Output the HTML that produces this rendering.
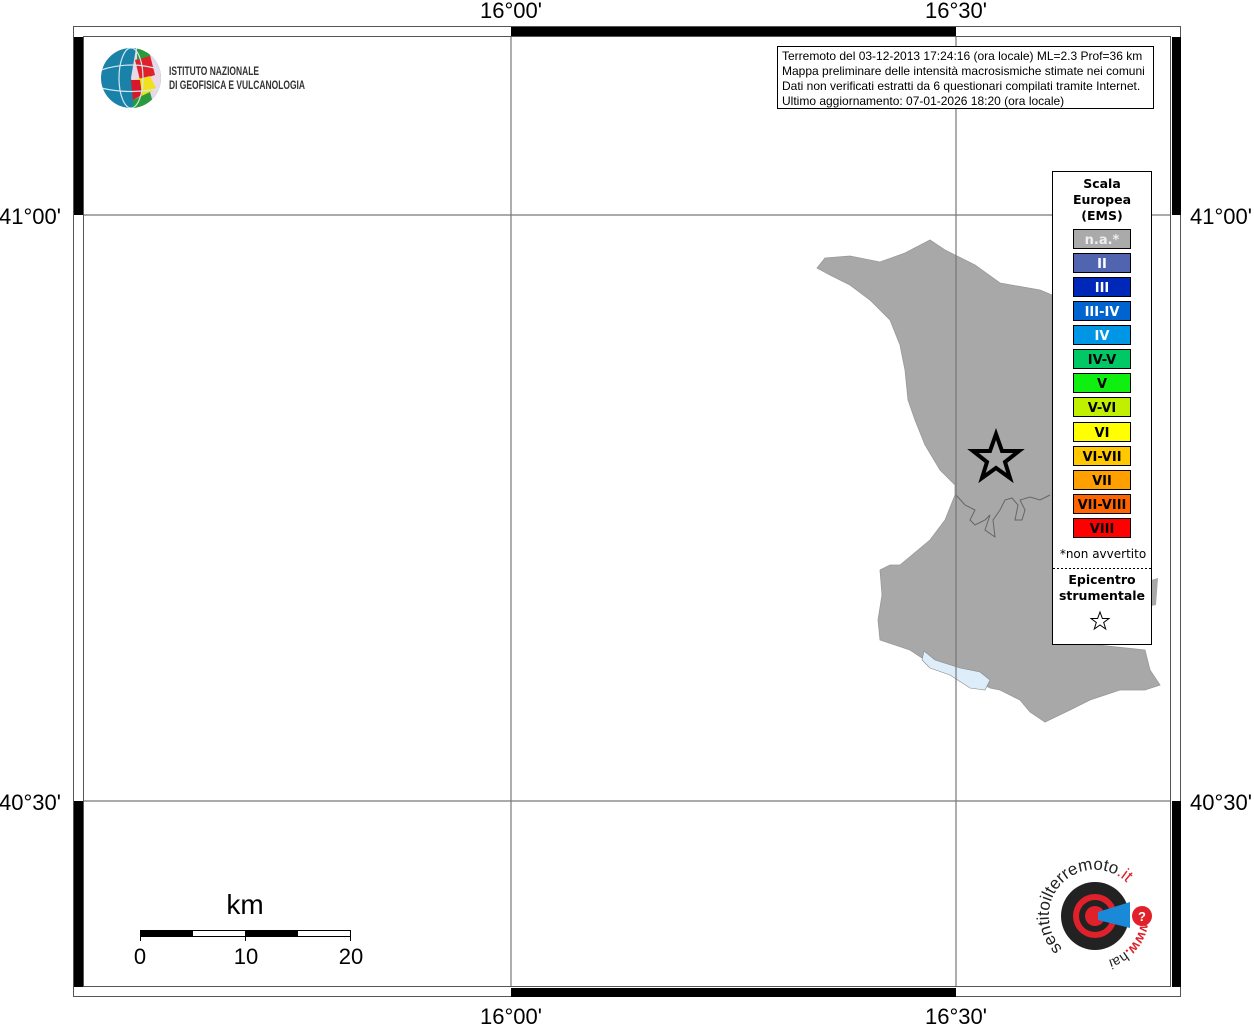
<!DOCTYPE html>
<html><head><meta charset="utf-8"><style>
html,body{margin:0;padding:0;background:#fff;}
svg{display:block;}
</style></head><body>
<svg width="1254" height="1024" viewBox="0 0 1254 1024" xmlns="http://www.w3.org/2000/svg" font-family="Liberation Sans, sans-serif">
<rect width="1254" height="1024" fill="#fff"/>
<path d="M817,268 L825,258 L850,256 L880,262 L905,253 L930,240 L945,250 L975,265 L1000,283 L1040,290 L1052,295 L1052,640 L1145,650 L1150,670 L1160,685 L1145,690 L1120,690 L1090,700 L1070,710 L1045,722 L1030,712 L1020,700 L1000,690 L990,688 L975,680 L950,668 L925,660 L910,650 L880,640 L878,620 L882,595 L880,570 L890,565 L900,565 L930,540 L945,520 L955,495 L955,485 L940,470 L925,445 L915,420 L908,400 L905,370 L900,345 L890,320 L870,300 L850,285 L830,275 Z" fill="#a8a8a8" stroke="#999" stroke-width="0.8"/>
<path d="M1151,580 L1158,578 L1156,605 L1151,606Z" fill="#a8a8a8"/>
<path d="M924,651 L935,660 L960,668 L980,672 L990,680 L985,690 L970,688 L950,675 L930,668 L922,660Z" fill="#ddeefa" stroke="#888" stroke-width="0.6"/>
<path d="M956,495 L965,505 L975,510 L970,520 L975,525 L985,520 L990,515 L985,530 L995,537 L993,520 L1000,510 L1005,500 L1012,498 L1018,505 L1015,520 L1022,520 L1025,510 L1020,500 L1030,497 L1040,500 L1050,495" fill="none" stroke="#666" stroke-width="1"/>
<g stroke="#777" stroke-width="1.2">
<line x1="511" y1="36" x2="511" y2="987"/><line x1="956" y1="36" x2="956" y2="987"/>
<line x1="83" y1="215" x2="1171" y2="215"/><line x1="83" y1="801" x2="1171" y2="801"/>
</g>
<rect x="73.5" y="26.5" width="1107" height="970" fill="none" stroke="#555" stroke-width="1"/>
<rect x="83.5" y="36.5" width="1087" height="950" fill="none" stroke="#555" stroke-width="1"/>
<g fill="#000">
<rect x="511" y="27" width="445" height="9"/><rect x="511" y="988" width="445" height="9"/>
<rect x="74" y="37" width="9" height="178"/><rect x="74" y="801" width="9" height="186"/>
<rect x="1172" y="37" width="9" height="178"/><rect x="1172" y="801" width="9" height="186"/>
</g>
<g font-size="22" fill="#000">
<text x="511" y="18" text-anchor="middle">16°00'</text>
<text x="956" y="18" text-anchor="middle">16°30'</text>
<text x="511" y="1024" text-anchor="middle">16°00'</text>
<text x="956" y="1024" text-anchor="middle">16°30'</text>
<text x="-1" y="224">41°00'</text><text x="-1" y="810">40°30'</text>
<text x="1190" y="224">41°00'</text><text x="1190" y="810">40°30'</text>
</g>
<path d="M996,434 L1002,451 L1019,451 L1005,462 L1010,478 L996,468 L982,478 L987,462 L973,451 L990,451Z" fill="none" stroke="#000" stroke-width="4"/>
<rect x="777.5" y="46.5" width="376" height="62" fill="#fff" stroke="#000"/>
<g font-size="12" fill="#000">
<text x="782" y="60">Terremoto del 03-12-2013 17:24:16 (ora locale) ML=2.3 Prof=36 km</text>
<text x="782" y="75">Mappa preliminare delle intensità macrosismiche stimate nei comuni</text>
<text x="782" y="90">Dati non verificati estratti da 6 questionari compilati tramite Internet.</text>
<text x="782" y="105">Ultimo aggiornamento: 07-01-2026 18:20 (ora locale)</text>
</g>
<rect x="1052.5" y="171.5" width="99" height="473" fill="#fff" stroke="#000"/>
<g font-family="DejaVu Sans, sans-serif" font-weight="bold" font-size="12.5" text-anchor="middle">
<text x="1102" y="188">Scala</text>
<text x="1102" y="204">Europea</text>
<text x="1102" y="220">(EMS)</text>
</g>
<g stroke="#000" stroke-width="1">
<rect x="1073.5" y="229.5" width="57" height="19" fill="#aaaaaa"/>
<rect x="1073.5" y="253.5" width="57" height="19" fill="#5064b0"/>
<rect x="1073.5" y="277.5" width="57" height="19" fill="#0028b8"/>
<rect x="1073.5" y="301.5" width="57" height="19" fill="#0064d0"/>
<rect x="1073.5" y="325.5" width="57" height="19" fill="#0096e6"/>
<rect x="1073.5" y="349.5" width="57" height="19" fill="#00c864"/>
<rect x="1073.5" y="373.5" width="57" height="19" fill="#10f010"/>
<rect x="1073.5" y="397.5" width="57" height="19" fill="#c0f000"/>
<rect x="1073.5" y="422.5" width="57" height="19" fill="#ffff00"/>
<rect x="1073.5" y="446.5" width="57" height="19" fill="#ffc800"/>
<rect x="1073.5" y="470.5" width="57" height="19" fill="#ffa000"/>
<rect x="1073.5" y="494.5" width="57" height="19" fill="#ff6400"/>
<rect x="1073.5" y="518.5" width="57" height="19" fill="#ff0000"/>
</g>
<g font-family="DejaVu Sans, sans-serif" font-weight="bold" font-size="13" text-anchor="middle">
<text x="1102" y="244" fill="#eee">n.a.*</text>
<text x="1102" y="268" fill="#fff">II</text>
<text x="1102" y="292" fill="#fff">III</text>
<text x="1102" y="316" fill="#fff">III-IV</text>
<text x="1102" y="340" fill="#fff">IV</text>
<text x="1102" y="364" fill="#000">IV-V</text>
<text x="1102" y="388" fill="#000">V</text>
<text x="1102" y="412" fill="#000">V-VI</text>
<text x="1102" y="437" fill="#000">VI</text>
<text x="1102" y="461" fill="#000">VI-VII</text>
<text x="1102" y="485" fill="#000">VII</text>
<text x="1102" y="509" fill="#000">VII-VIII</text>
<text x="1102" y="533" fill="#000">VIII</text>
</g>
<text x="1103" y="558" font-family="DejaVu Sans, sans-serif" font-size="12" text-anchor="middle">*non avvertito</text>
<line x1="1053" y1="568.5" x2="1151" y2="568.5" stroke="#000" stroke-dasharray="2,2"/>
<g font-family="DejaVu Sans, sans-serif" font-weight="bold" font-size="12.5" text-anchor="middle">
<text x="1102" y="584">Epicentro</text>
<text x="1102" y="600">strumentale</text>
</g>
<path d="M1100,612 L1102.4,618.5 L1109,618.5 L1103.7,622.5 L1105.7,629 L1100,625 L1094.3,629 L1096.3,622.5 L1091,618.5 L1097.6,618.5Z" fill="#fff" stroke="#000" stroke-width="1"/>
<text x="245" y="914" font-size="28" text-anchor="middle">km</text>
<rect x="140.5" y="930.5" width="210" height="6" fill="#fff" stroke="#000"/>
<rect x="140" y="930" width="53" height="7" fill="#000"/><rect x="245" y="930" width="53" height="7" fill="#000"/>
<g stroke="#000"><line x1="140.5" y1="930" x2="140.5" y2="941"/><line x1="245.5" y1="930" x2="245.5" y2="941"/><line x1="350.5" y1="930" x2="350.5" y2="941"/></g>
<g font-size="22" text-anchor="middle"><text x="140" y="964">0</text><text x="246" y="964">10</text><text x="351" y="964">20</text></g>
<defs><clipPath id="g"><circle cx="131" cy="78" r="30"/></clipPath>
<path id="arc" d="M1062.5,948.5 A46,46 0 1,1 1138,900"/>
<path id="arc2" d="M1141,920 A46,46 0 0,1 1079,959"/></defs>
<g clip-path="url(#g)">
<rect x="100" y="47" width="62" height="62" fill="#1a82a8"/>
<path d="M136,48 L162,48 L162,110 L136,110 L131,78Z" fill="#e8d8e8"/>
<path d="M135,60 L150,55 L155,75 L140,80Z" fill="#e0202a"/>
<path d="M134,80 L150,76 L156,88 L140,100Z" fill="#f0e020"/>
<path d="M131,80 L140,80 L142,95 L133,100Z" fill="#d8182a"/>
<path d="M133,100 L150,92 L155,110 L133,110Z" fill="#2a9a3a"/>
<path d="M137,48 L150,48 L150,56 L137,60Z" fill="#2a9a3a"/>
<g stroke="#cfeaf3" stroke-width="1.2" fill="none"><ellipse cx="131" cy="78" rx="12" ry="30"/><path d="M101,70 Q131,60 161,70 M101,88 Q131,95 161,88"/></g>
</g>
<text x="169" y="75" font-size="12" fill="#333" font-weight="bold" textLength="90" lengthAdjust="spacingAndGlyphs">ISTITUTO NAZIONALE</text>
<text x="169" y="89" font-size="12" fill="#333" font-weight="bold" textLength="136" lengthAdjust="spacingAndGlyphs">DI GEOFISICA E VULCANOLOGIA</text>
<circle cx="1095" cy="916" r="34" fill="#222"/>
<circle cx="1095" cy="916" r="22" fill="#e0202a"/>
<circle cx="1095" cy="916" r="16" fill="#222"/>
<circle cx="1095" cy="916" r="10" fill="#e0202a"/>
<path d="M1098,912 L1130,902 L1130,928 L1098,920Z" fill="#1a8ad8"/>
<circle cx="1142" cy="916" r="10" fill="#e0202a"/>
<text x="1142" y="921" font-size="13" fill="#fff" font-weight="bold" text-anchor="middle">?</text>
<text font-size="17" fill="#222"><textPath href="#arc">sentitoilterremoto<tspan fill="#e0202a">.it</tspan></textPath></text>
<text font-size="14" fill="#222"><textPath href="#arc2"><tspan fill="#e0202a" font-weight="bold">www.</tspan>hai</textPath></text>
</svg>
</body></html>
